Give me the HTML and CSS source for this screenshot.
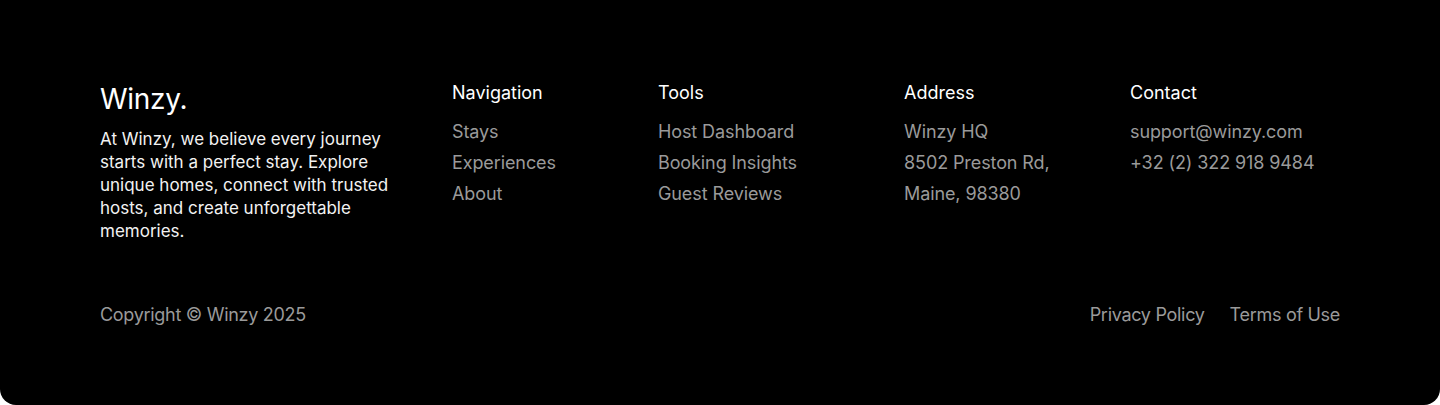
FILE: index.html
```html
<!DOCTYPE html>
<html lang="en">
<head>
    <meta charset="UTF-8">
    <meta name="viewport" content="width=device-width, initial-scale=1.0">
    <title>Winzy</title>
    <link rel="stylesheet" href="styles.css">
</head>
<body>
    <footer class="footer">
        <div class="footer-top">
            <div class="brand">
                <div class="logo">Winzy.</div>
                <p class="about">At Winzy, we believe every journey starts with a perfect stay. Explore unique homes, connect with trusted hosts, and create unforgettable memories.</p>
            </div>
            <div class="col">
                <h4>Navigation</h4>
                <ul>
                    <li><a href="#">Stays</a></li>
                    <li><a href="#">Experiences</a></li>
                    <li><a href="#">About</a></li>
                </ul>
            </div>
            <div class="col">
                <h4>Tools</h4>
                <ul>
                    <li><a href="#">Host Dashboard</a></li>
                    <li><a href="#">Booking Insights</a></li>
                    <li><a href="#">Guest Reviews</a></li>
                </ul>
            </div>
            <div class="col">
                <h4>Address</h4>
                <ul>
                    <li>Winzy HQ</li>
                    <li>8502 Preston Rd,</li>
                    <li>Maine, 98380</li>
                </ul>
            </div>
            <div class="col">
                <h4>Contact</h4>
                <ul>
                    <li><a href="#">support@winzy.com</a></li>
                    <li><a href="#">+32 (2) 322 918 9484</a></li>
                </ul>
            </div>
        </div>
        <div class="footer-bottom">
            <span>Copyright © Winzy 2025</span>
            <div class="legal">
                <a href="#">Privacy Policy</a>
                <a href="#">Terms of Use</a>
            </div>
        </div>
    </footer>
</body>
</html>
```

FILE: styles.css
```css
body {
    margin: 0;
    background: #ffffff;
    font-family: Inter, "Noto Sans", sans-serif;
}
.footer {
    background: #000000;
    color: #ffffff;
    height: 405px;
    box-sizing: border-box;
    padding: 81px 100px 0;
    border-radius: 0 0 16px 16px;
}
.footer-top {
    display: grid;
    grid-template-columns: 352px 206px 246px 226px 1fr;
}
.logo {
    font-size: 28px;
    line-height: 36px;
    letter-spacing: -0.3px;
}
.about {
    margin: 11px 0 0;
    width: 320px;
    font-size: 17px;
    line-height: 23px;
    color: #f2f2f2;
}
.col h4 {
    margin: 0;
    font-size: 18px;
    font-weight: 400;
    line-height: 24px;
    letter-spacing: 0;
}
.col ul {
    list-style: none;
    margin: 11px 0 0;
    padding: 0;
}
.col li {
    font-size: 18px;
    line-height: 31px;
    letter-spacing: -0.1px;
    color: #9a9a9a;
}
.col a,
.footer-bottom a {
    color: #9a9a9a;
    text-decoration: none;
}
.footer-bottom {
    display: flex;
    justify-content: space-between;
    margin-top: 60px;
    font-size: 18px;
    line-height: 24px;
    letter-spacing: -0.3px;
    color: #9a9a9a;
}
.legal {
    display: flex;
    gap: 25px;
}
```
